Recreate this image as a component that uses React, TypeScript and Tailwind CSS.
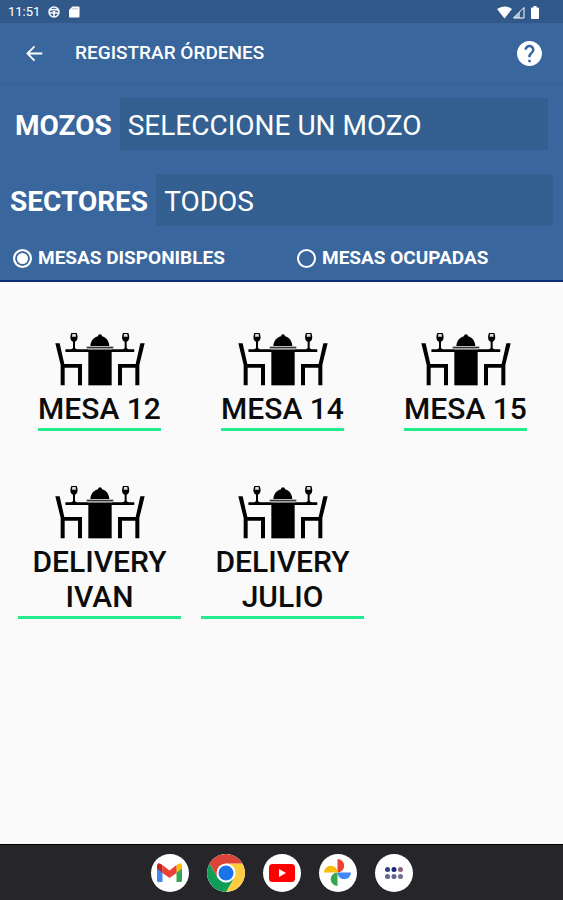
import React, { useState } from 'react';

const mesas = ['MESA 12', 'MESA 14', 'MESA 15', 'DELIVERY IVAN', 'DELIVERY JULIO'];

function TableIcon() {
  return (
    <svg className="w-[90px] h-[54px]" viewBox="15 21 270 162" aria-hidden="true">
      <path d="M16 55 H29 L43 117 H96 V181 H84 V128 H44 V181 H32 V120 Z" />
      <path d="M284 55 H271 L257 117 H204 V181 H216 V128 H256 V181 H268 V120 Z" />
      <rect x="46" y="73" width="207" height="8" rx="2" />
      <rect x="115" y="78" width="70" height="103" />
      <path d="M121 63 C122 48 131 37 144 34 C144 26 156 26 156 34 C169 37 177 48 178 63 Z" />
      <rect x="110" y="65" width="80" height="5" fill="#333" />
      <rect x="114" y="71" width="72" height="4" fill="#777" />
      <path d="M64 24 H80 C85 37 83 47 75 50 V69 L82 75 H62 L69 69 V50 C61 47 59 37 64 24 Z" />
      <path d="M219 24 H235 C240 37 238 47 230 50 V69 L237 75 H217 L224 69 V50 C216 47 214 37 219 24 Z" />
      <path d="M67 27 H77 L78 35 H66 Z M222 27 H232 L233 35 H221 Z" fill="#ddd" />
    </svg>
  );
}

function StatusBar() {
  return (
    <div className="flex h-[23px] items-center justify-between bg-[#30598a] pl-2 pr-6 pt-px text-white">
      <div className="flex items-center gap-2">
        <span className="text-[13px] leading-4">11:51</span>
        <svg className="size-3" viewBox="0 0 24 24" fill="none" stroke="currentColor" strokeWidth="3">
          <circle cx="12" cy="12" r="10" />
          <path d="M2 9 Q12 5 22 9 M3 14 H9 M15 14 H21 M12 14 V22" />
          <circle cx="12" cy="13" r="2" />
        </svg>
        <svg className="h-3 w-3" viewBox="0 0 24 24" fill="currentColor">
          <path d="M9 1 H21 Q23 1 23 3 V21 Q23 23 21 23 H4 Q2 23 2 21 V8 Z" />
          <path d="M10 4 V7 M14 4 V7 M18 4 V7" stroke="#30598a" strokeWidth="1" />
        </svg>
      </div>
      <div className="flex items-center">
        <svg className="h-[13px] w-[15px]" viewBox="0 0 30 26" fill="currentColor">
          <path d="M15 25 L0 6 Q15 -4 30 6 Z" />
        </svg>
        <svg className="h-[13px] w-[13px]" viewBox="0 0 26 26" fill="none" stroke="currentColor" strokeWidth="2">
          <path d="M3 24 H24 V3 Z" />
          <path d="M3 24 H16 V11 Z" fill="currentColor" stroke="none" opacity="0.6" />
        </svg>
        <svg className="ml-1.5 h-[13px] w-2" viewBox="0 0 16 26" fill="currentColor">
          <path d="M5 0 H11 V3 H14 Q16 3 16 5 V24 Q16 26 14 26 H2 Q0 26 0 24 V5 Q0 3 2 3 H5 Z" />
        </svg>
      </div>
    </div>
  );
}

function Dock() {
  const app = 'flex size-[38px] items-center justify-center overflow-hidden rounded-full bg-white';
  return (
    <nav className="flex h-14 items-center justify-center gap-[18px] border-t border-black bg-[#25252a]">
      <button className={app} aria-label="Gmail">
        <svg className="h-[19px] w-[25px]" viewBox="0 0 50 38">
          <path d="M0 6 L11 14 V38 H3 Q0 38 0 35 Z" fill="#4285f4" />
          <path d="M50 6 L39 14 V38 H47 Q50 38 50 35 Z" fill="#34a853" />
          <path d="M39 4 Q50 -4 50 6 V11 L39 20 Z" fill="#fbbc04" />
          <path d="M0 6 Q0 -4 11 4 V20 L0 11 Z" fill="#c5221f" />
          <path d="M11 4 L25 15 L39 4 V20 L25 30 L11 20 Z" fill="#ea4335" />
        </svg>
      </button>
      <button className={app} aria-label="Chrome">
        <svg className="size-[38px]" viewBox="0 0 48 48">
          <path d="M24 12 H44.8 A24 24 0 0 1 24 48 L34.4 30 Z" fill="#ffcd40" />
          <path d="M3.2 12 L13.6 30 L24 36 L34.4 30 L24 48 A24 24 0 0 1 3.2 12 Z" fill="#0f9d58" />
          <path d="M3.2 12 A24 24 0 0 1 44.8 12 H24 L13.6 30 Z" fill="#db4437" />
          <circle cx="24" cy="24" r="12" fill="#fff" />
          <circle cx="24" cy="24" r="9.5" fill="#1a73e8" />
        </svg>
      </button>
      <button className={app} aria-label="YouTube">
        <svg className="h-[18px] w-[26px]" viewBox="0 0 52 36">
          <rect width="52" height="36" rx="7" fill="#f00" />
          <path d="M20 10 L34 18 L20 26 Z" fill="#fff" />
        </svg>
      </button>
      <button className={app} aria-label="Fotos">
        <svg className="size-[27px]" viewBox="0 0 54 54">
          <path d="M27 0 A13.5 13.5 0 0 1 27 27 Z" fill="#ea4335" />
          <path d="M54 27 A13.5 13.5 0 0 1 27 27 Z" fill="#4285f4" />
          <path d="M27 54 A13.5 13.5 0 0 1 27 27 Z" fill="#34a853" />
          <path d="M0 27 A13.5 13.5 0 0 1 27 27 Z" fill="#fbbc04" />
        </svg>
      </button>
      <button className={app} aria-label="Aplicaciones">
        <svg className="h-3 w-[18px]" viewBox="0 0 36 24">
          <circle cx="5" cy="5" r="5" fill="#34417f" />
          <circle cx="18" cy="5" r="5" fill="#1c2b7c" />
          <circle cx="31" cy="5" r="5" fill="#8d6180" />
          <circle cx="5" cy="19" r="5" fill="#63668a" />
          <circle cx="18" cy="19" r="5" fill="#63668a" />
          <circle cx="31" cy="19" r="5" fill="#70708c" />
        </svg>
      </button>
    </nav>
  );
}

export default function App() {
  const [estado, setEstado] = useState('disponibles');
  const radio =
    'size-[19px] appearance-none rounded-full border-2 border-white checked:bg-white checked:shadow-[inset_0_0_0_2px_#39669d]';

  return (
    <div className="flex min-h-screen flex-col bg-[#fafafa] font-[Roboto,sans-serif]">
      <StatusBar />
      <header className="border-b-2 border-[#0b2f78] bg-[#39669d] text-white">
        <div className="flex h-[61px] items-center border-b border-[#345f93] pl-[26px] pr-[21px]">
          <button aria-label="Volver">
            <svg className="size-[17px]" viewBox="0 0 24 24" fill="none" stroke="currentColor" strokeWidth="2.5">
              <path d="M23 12 H3 M12 2 L2 12 L12 22" />
            </svg>
          </button>
          <h1 className="ml-8 flex-1 text-[19px] font-medium leading-7">REGISTRAR ÓRDENES</h1>
          <button aria-label="Ayuda">
            <svg className="size-[25px]" viewBox="2 2 20 20" fill="currentColor">
              <path d="M12 2C6.48 2 2 6.48 2 12s4.48 10 10 10 10-4.48 10-10S17.52 2 12 2zm1 17h-2v-2h2v2zm2.07-7.75l-.9.92C13.45 12.9 13 13.5 13 15h-2v-.5c0-1.1.45-2.1 1.17-2.83l1.24-1.26c.37-.36.59-.86.59-1.41 0-1.1-.9-2-2-2s-2 .9-2 2H8c0-2.21 1.79-4 4-4s4 1.79 4 4c0 .88-.36 1.68-.93 2.25z" />
            </svg>
          </button>
        </div>

        <div className="flex items-center gap-2 px-[15px] pt-[14px]">
          <label htmlFor="mozo" className="pt-1 text-[28px] font-bold">MOZOS</label>
          <select id="mozo" className="h-[52px] min-w-0 flex-1 appearance-none bg-[#345f91] px-2 pt-1 text-[28px]">
            <option>SELECCIONE UN MOZO</option>
          </select>
        </div>
        <div className="flex items-center gap-2 px-[10px] pt-6">
          <label htmlFor="sector" className="pt-1 text-[28px] font-bold">SECTORES</label>
          <select id="sector" className="h-[52px] min-w-0 flex-1 appearance-none bg-[#345f91] px-2 pt-1 text-[28px]">
            <option>TODOS</option>
          </select>
        </div>

        <div className="grid grid-cols-2 gap-1 pb-2 pl-[13px] pt-[18px] text-[19px] font-bold leading-7">
          <label className="flex items-center gap-1.5">
            <input
              type="radio"
              name="estado"
              className={radio}
              checked={estado === 'disponibles'}
              onChange={() => setEstado('disponibles')}
            />
            MESAS DISPONIBLES
          </label>
          <label className="flex items-center gap-1.5 pl-[7px]">
            <input
              type="radio"
              name="estado"
              className={radio}
              checked={estado === 'ocupadas'}
              onChange={() => setEstado('ocupadas')}
            />
            MESAS OCUPADAS
          </label>
        </div>
      </header>

      <main className="grid flex-1 grid-cols-3 content-start gap-y-[54px] pl-2 pr-[6px] pt-[50px]">
        {mesas.map((mesa) => (
          <button key={mesa} className="flex flex-col items-center self-start px-[10px]">
            <TableIcon />
            <span className="mt-[5px] border-b-[3px] border-[#23ec8c] pb-[2px] text-[30px] font-medium leading-[35px] text-[#0c0c0c]">
              {mesa}
            </span>
          </button>
        ))}
      </main>

      <Dock />
    </div>
  );
}
